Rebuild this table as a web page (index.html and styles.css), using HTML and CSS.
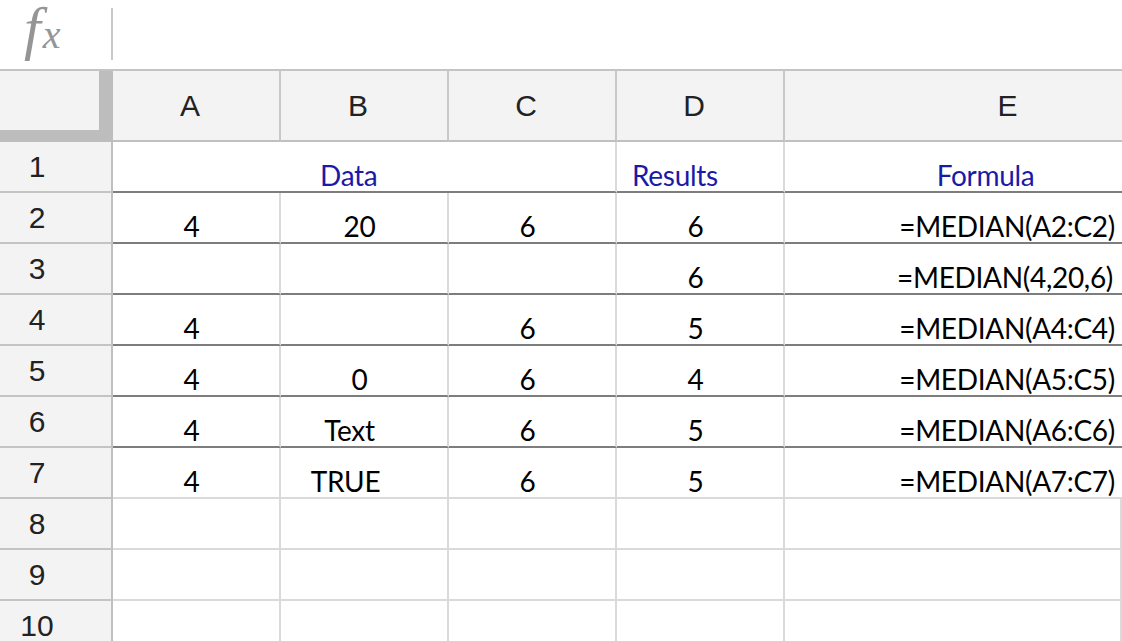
FILE: index.html
```html
<!DOCTYPE html>
<html>
<head>
<meta charset="utf-8">
<link rel="stylesheet" href="styles.css">
</head>
<body>
<div class="formula-bar">
  <div class="fx"><span class="fx-f">f</span><span class="fx-x">x</span></div>
  <span class="sep"></span>
</div>
<div class="sheet">
  <div class="corner"><div class="corner-inner"></div></div>
  <div class="colhead">A</div>
  <div class="colhead">B</div>
  <div class="colhead">C</div>
  <div class="colhead">D</div>
  <div class="colhead last">E</div>

  <div class="rowhead">1</div>
  <div class="cell dark span3 data-title">Data</div>
  <div class="cell dark results-title">Results</div>
  <div class="cell dark formula-title">Formula</div>

  <div class="rowhead">2</div>
  <div class="cell dark c">4</div>
  <div class="cell dark c">20</div>
  <div class="cell dark c">6</div>
  <div class="cell dark c">6</div>
  <div class="cell dark r">=MEDIAN(A2:C2)</div>

  <div class="rowhead">3</div>
  <div class="cell dark c"></div>
  <div class="cell dark c"></div>
  <div class="cell dark c"></div>
  <div class="cell dark c">6</div>
  <div class="cell dark r r3">=MEDIAN(4,20,6)</div>

  <div class="rowhead">4</div>
  <div class="cell dark c">4</div>
  <div class="cell dark c"></div>
  <div class="cell dark c">6</div>
  <div class="cell dark c">5</div>
  <div class="cell dark r">=MEDIAN(A4:C4)</div>

  <div class="rowhead">5</div>
  <div class="cell dark c">4</div>
  <div class="cell dark c">0</div>
  <div class="cell dark c">6</div>
  <div class="cell dark c">4</div>
  <div class="cell dark r">=MEDIAN(A5:C5)</div>

  <div class="rowhead">6</div>
  <div class="cell dark c">4</div>
  <div class="cell dark c b-text">Text</div>
  <div class="cell dark c">6</div>
  <div class="cell dark c">5</div>
  <div class="cell dark r">=MEDIAN(A6:C6)</div>

  <div class="rowhead">7</div>
  <div class="cell c">4</div>
  <div class="cell c b-true">TRUE</div>
  <div class="cell c">6</div>
  <div class="cell c">5</div>
  <div class="cell r">=MEDIAN(A7:C7)</div>

  <div class="rowhead">8</div>
  <div class="cell"></div><div class="cell"></div><div class="cell"></div><div class="cell"></div><div class="cell"></div>

  <div class="rowhead">9</div>
  <div class="cell"></div><div class="cell"></div><div class="cell"></div><div class="cell"></div><div class="cell"></div>

  <div class="rowhead">10</div>
  <div class="cell"></div><div class="cell"></div><div class="cell"></div><div class="cell"></div><div class="cell"></div>
</div>
</body>
</html>
```
FILE: styles.css
```css
html, body {
  margin: 0;
  padding: 0;
  background: #ffffff;
}
body {
  width: 1122px;
  height: 641px;
  overflow: hidden;
}
.formula-bar {
  height: 69px;
  border-bottom: 2px solid #c4c4c4;
  display: flex;
  align-items: flex-start;
  box-sizing: content-box;
}
.fx {
  display: flex;
  align-items: baseline;
  font-family: "Liberation Serif", "DejaVu Serif", serif;
  font-style: italic;
  color: #959595;
  margin: 3px 0 0 24px;
  width: 87px;
  white-space: nowrap;
}
.fx-f {
  font-size: 60px;
  line-height: 50px;
}
.fx-x {
  font-size: 40px;
  line-height: 40px;
  margin-left: 2px;
}
.sep {
  width: 2px;
  height: 52px;
  margin-top: 8px;
  background: #c8c8c8;
}
.sheet {
  display: grid;
  grid-template-columns: 113px 168px 168px 168px 168px 337px;
  grid-template-rows: 71px repeat(10, 51px);
}
.corner {
  background: #bdbdbd;
}
.corner-inner {
  width: 99px;
  height: 59px;
  background: #f3f3f3;
}
.colhead {
  background: #f3f3f3;
  border-right: 2px solid #c8c8c8;
  border-bottom: 2px solid #c0c0c0;
  display: flex;
  align-items: center;
  justify-content: center;
  font-family: "Liberation Sans", Arial, sans-serif;
  font-size: 30px;
  color: #222222;
  padding-right: 12px;
}
.colhead.last {
  border-right: none;
  padding-right: 0;
  padding-left: 108px;
}
.rowhead {
  background: #f3f3f3;
  border-right: 2px solid #c0c0c0;
  border-bottom: 2px solid #c4c4c4;
  display: flex;
  align-items: center;
  justify-content: center;
  padding-right: 37px;
  font-family: "Liberation Sans", Arial, sans-serif;
  font-size: 30px;
  color: #222222;
}
.cell {
  border-right: 2px solid #dadada;
  border-bottom: 2px solid #dadada;
  display: flex;
  align-items: flex-end;
  padding-bottom: 1px;
  font-family: Lato, "Open Sans", sans-serif;
  font-size: 28px;
  letter-spacing: -0.3px;
  line-height: 30px;
  color: #000000;
  white-space: nowrap;
  min-width: 0;
}
.cell.dark {
  border-bottom-color: #7d7d7d;
}
.span3 {
  grid-column: span 3;
}
.c {
  justify-content: center;
  padding-right: 9px;
}
.r {
  justify-content: flex-end;
  padding-right: 7px;
  border-right: none;
}
.data-title, .results-title, .formula-title {
  color: #1a1aa8;
}
.data-title {
  padding-left: 207px;
}
.results-title {
  padding-left: 15px;
}
.formula-title {
  justify-content: center;
  padding-left: 64px;
  border-right: none;
}
.b-text { padding-right: 29px; }
.b-true { padding-right: 37px; }
.r3 { padding-right: 9px; }
```
